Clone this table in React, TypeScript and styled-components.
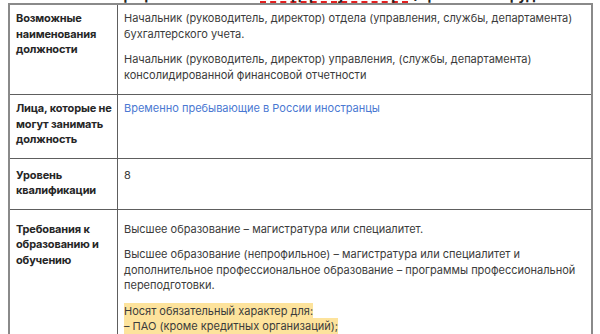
import styled, { createGlobalStyle } from "styled-components";

const GlobalStyle = createGlobalStyle`
    body {
        margin: 0;
        background: #fff;
        font-family: Inter, "Noto Sans", sans-serif;
        color: #3b3b3b;
    }
`

const PageDiv = styled.div`
    padding: 0 7px 0 8px;
`

const TitleClip = styled.div`
    height: 3px;
    overflow: hidden;
    display: flex;
    align-items: flex-end;
    padding-left: 105px;
`

const TitleText = styled.div`
    font-size: 14px;
    font-weight: 700;
    line-height: 12px;
    white-space: nowrap;
    color: #222;
`

const TitleLink = styled.span`
    display: inline-block;
    line-height: 12px;
    border-bottom: 2px dashed #e02020;
`

const Table = styled.table`
    width: 100%;
    border-collapse: collapse;
    border: 2px solid #8a8a8a;
    font-size: 11px;
    line-height: 15.5px;
`

const HeadCell = styled.td<{ $top?: number }>`
    width: 98px;
    border: 1px solid #5e5e5e;
    padding: ${(p) => p.$top ?? 6}px 3px 0 6px;
    vertical-align: top;
    font-weight: 700;
    letter-spacing: -0.15px;
    color: #262626;
`

const Cell = styled.td<{ $top?: number; $bottom?: number }>`
    border: 1px solid #5e5e5e;
    padding: ${(p) => p.$top ?? 6}px 6px ${(p) => p.$bottom ?? 1}px 6px;
    vertical-align: top;
`

const Para = styled.p`
    margin: 0 0 10px 0;
`

const Link = styled.a`
    color: #4a78d2;
    text-decoration: none;
`

const Mark = styled.span`
    background: #fde39c;
    padding: 1px 0;
`

const firstRow = {
    head: "Возможные наименования должности",
    body: [
        "Начальник (руководитель, директор) отдела (управления, службы, департамента) бухгалтерского учета.",
        "Начальник (руководитель, директор) управления, (службы, департамента) консолидированной финансовой отчетности",
    ],
}

export default function App() {
    return (
        <PageDiv>
            <GlobalStyle/>
            <TitleClip>
                <TitleText>
                    Профессиональный <TitleLink>стандарт бухгалтера</TitleLink> (Приказ Минтруда № 103н) — главный бухгалтер
                </TitleText>
            </TitleClip>
            <Table>
                <tbody>
                    <tr>
                        <HeadCell><Para>{firstRow.head}</Para></HeadCell>
                        <Cell>
                            {firstRow.body.map((t) => <Para key={t}>{t}</Para>)}
                        </Cell>
                    </tr>
                    <tr>
                        <HeadCell><Para>Лица, которые не могут занимать должность</Para></HeadCell>
                        <Cell><Para><Link href="#">Временно пребывающие в России иностранцы</Link></Para></Cell>
                    </tr>
                    <tr>
                        <HeadCell $top={9}><Para>Уровень квалификации</Para></HeadCell>
                        <Cell $top={9} $bottom={4}><Para>8</Para></Cell>
                    </tr>
                    <tr>
                        <HeadCell $top={12}><Para>Требования к образованию и обучению</Para></HeadCell>
                        <Cell $top={12}>
                            <Para>Высшее образование – магистратура или специалитет.</Para>
                            <Para>
                                Высшее образование (непрофильное) – магистратура или специалитет и дополнительное
                                профессиональное образование – программы профессиональной переподготовки.
                            </Para>
                            <Para>
                                <Mark>Носят обязательный характер для:</Mark><br/>
                                <Mark>– ПАО (кроме кредитных организаций);</Mark><br/>
                                <Mark>– страховых организаций и негосударственных пенсионных фондов;</Mark>
                            </Para>
                        </Cell>
                    </tr>
                </tbody>
            </Table>
        </PageDiv>
    )
}
